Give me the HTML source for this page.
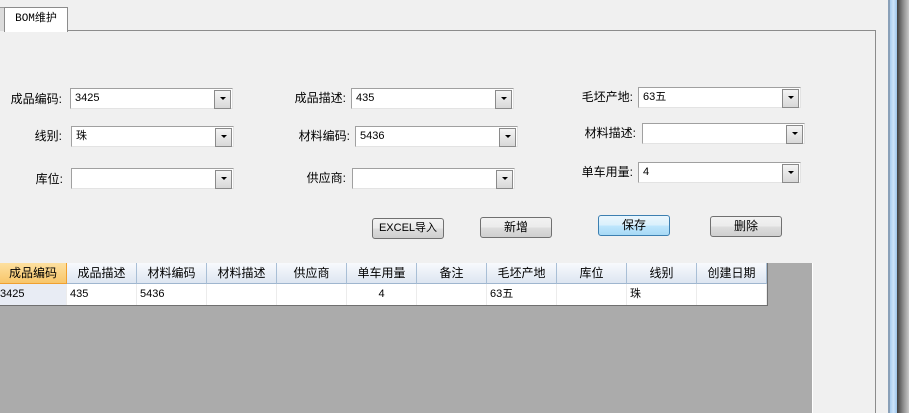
<!DOCTYPE html>
<html><head><meta charset="utf-8"><style>
*{margin:0;padding:0;box-sizing:border-box}
body{width:909px;height:413px;background:#f0f0f0;position:relative;overflow:hidden;font-family:"Liberation Sans","Noto Sans CJK SC","WenQuanYi Zen Hei",sans-serif;font-size:12px;color:#000}
.a{position:absolute}
.lbl{position:absolute;text-align:right;width:90px;line-height:20px}
.cb{position:absolute;width:163px;height:21px;background:#fff;border:1px solid #a0a0a0;border-right-color:#e3e3e3;border-bottom-color:#e3e3e3;line-height:19px;padding-left:4px;font-size:11px}
.cb::after{content:"";position:absolute;right:1px;top:1px;width:15px;height:17px;background:linear-gradient(#f4f4f4,#d8d8d8);border:1px solid #8a8a8a}
.cb i{position:absolute;right:6px;top:8px;border-left:3px solid transparent;border-right:3px solid transparent;border-top:3px solid #000;z-index:2}
.btn{position:absolute;width:72px;height:21px;border:1px solid #707070;border-radius:3px;background:linear-gradient(#f2f2f2 0%,#ebebeb 50%,#dddddd 51%,#cfcfcf 100%);text-align:center;line-height:19px;font-size:12px}
.hd{position:absolute;top:263px;height:21px;width:70px;border-right:1px solid #a9bfd6;border-bottom:1px solid #9fb6cf;background:linear-gradient(#f8fafd,#dde6f1);text-align:center;line-height:20px}
.cl{position:absolute;top:284px;height:21px;width:70px;border-right:1px solid #ececec;background:#fff;line-height:20px;padding-left:3px;font-size:11px}
</style></head><body>
<div class="a" style="left:0;top:30px;width:876px;height:1px;background:#8c8c8c"></div>
<div class="a" style="left:875px;top:30px;width:1px;height:383px;background:#8c8c8c"></div>
<div class="a" style="left:0;top:7px;width:4px;height:24px;background:#dcdcdc;border-top:1px solid #999"></div>
<div class="a" style="left:4px;top:7px;width:64px;height:25px;background:#fff;border:1px solid #8c8c8c;border-bottom:none;text-align:center;line-height:22px;font-size:11px;font-family:'Liberation Mono','Noto Sans CJK SC',monospace">BOM维护</div>

<div class="lbl" style="left:-28px;top:89px">成品编码:</div><div class="cb" style="left:70px;top:88px">3425<i></i></div>
<div class="lbl" style="left:-28px;top:126px">线别:</div><div class="cb" style="left:71px;top:126px">珠<i></i></div>
<div class="lbl" style="left:-27px;top:169px">库位:</div><div class="cb" style="left:71px;top:168px"><i></i></div>

<div class="lbl" style="left:256px;top:88px">成品描述:</div><div class="cb" style="left:351px;top:88px">435<i></i></div>
<div class="lbl" style="left:260px;top:126px">材料编码:</div><div class="cb" style="left:355px;top:126px">5436<i></i></div>
<div class="lbl" style="left:256px;top:168px">供应商:</div><div class="cb" style="left:352px;top:168px"><i></i></div>

<div class="lbl" style="left:543px;top:87px">毛坯产地:</div><div class="cb" style="left:638px;top:87px">63五<i></i></div>
<div class="lbl" style="left:546px;top:123px">材料描述:</div><div class="cb" style="left:642px;top:123px"><i></i></div>
<div class="lbl" style="left:543px;top:162px">单车用量:</div><div class="cb" style="left:638px;top:162px">4<i></i></div>

<div class="btn" style="left:372px;top:218px;font-size:11px">EXCEL导入</div>
<div class="btn" style="left:480px;top:217px">新增</div>
<div class="btn" style="left:598px;top:215px;border-color:#3c7fb1;background:linear-gradient(#eaf6fd,#d9f0fc 50%,#bee6fd 51%,#a7d9f5)">保存</div>
<div class="btn" style="left:710px;top:216px">删除</div>

<div class="a" style="left:0;top:263px;width:812px;height:150px;background:#ababab"></div>
<div class="hd" style="left:0;width:67px;background:linear-gradient(#fde0a0,#f8c66a);border-right:1px solid #f0a030;border-bottom-color:#f0a030">成品编码</div>
<div class="hd" style="left:67px">成品描述</div>
<div class="hd" style="left:137px">材料编码</div>
<div class="hd" style="left:207px">材料描述</div>
<div class="hd" style="left:277px">供应商</div>
<div class="hd" style="left:347px">单车用量</div>
<div class="hd" style="left:417px">备注</div>
<div class="hd" style="left:487px">毛坯产地</div>
<div class="hd" style="left:557px">库位</div>
<div class="hd" style="left:627px">线别</div>
<div class="hd" style="left:697px">创建日期</div>
<div class="cl" style="left:0;width:67px;background:#e8ecf4;padding-left:0">3425</div>
<div class="cl" style="left:67px">435</div>
<div class="cl" style="left:137px">5436</div>
<div class="cl" style="left:207px"></div>
<div class="cl" style="left:277px"></div>
<div class="cl" style="left:347px;text-align:center;padding:0">4</div>
<div class="cl" style="left:417px"></div>
<div class="cl" style="left:487px">63五</div>
<div class="cl" style="left:557px"></div>
<div class="cl" style="left:627px">珠</div>
<div class="cl" style="left:697px"></div>
<div class="a" style="left:0;top:305px;width:768px;height:1px;background:#707070"></div>
<div class="a" style="left:767px;top:263px;width:1px;height:43px;background:#707070"></div>
<div class="a" style="left:812px;top:263px;width:1px;height:150px;background:#fff"></div>

<div class="a" style="left:888px;top:0;width:2px;height:413px;background:#8aa0b8"></div>
<div class="a" style="left:890px;top:0;width:7px;height:413px;background:linear-gradient(90deg,#a8cdf0,#cde4fa,#9cc4ea)"></div>
<div class="a" style="left:897px;top:0;width:12px;height:413px;background:linear-gradient(90deg,#404040,#8a8a8a,#c8c8c8)"></div>
</body></html>
